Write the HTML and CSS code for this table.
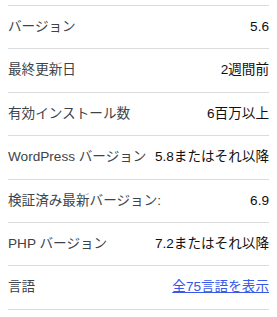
FILE: index.html
```html
<!DOCTYPE html>
<html lang="ja">

<head>
    <meta charset="UTF-8">
    <meta name="viewport" content="width=device-width, initial-scale=1.0">
    <title>プラグイン情報</title>
    <link rel="stylesheet" href="styles.css">
</head>

<body>
    <ul class="plugin-meta">
        <li>
            <span class="meta-label">バージョン</span>
            <strong class="meta-value">5.6</strong>
        </li>
        <li>
            <span class="meta-label">最終更新日</span>
            <strong class="meta-value">2週間前</strong>
        </li>
        <li>
            <span class="meta-label">有効インストール数</span>
            <strong class="meta-value">6百万以上</strong>
        </li>
        <li>
            <span class="meta-label">WordPress バージョン</span>
            <strong class="meta-value">5.8またはそれ以降</strong>
        </li>
        <li>
            <span class="meta-label">検証済み最新バージョン:</span>
            <strong class="meta-value">6.9</strong>
        </li>
        <li>
            <span class="meta-label">PHP バージョン</span>
            <strong class="meta-value">7.2またはそれ以降</strong>
        </li>
        <li>
            <span class="meta-label">言語</span>
            <a class="meta-link" href="#languages">全75言語を表示</a>
        </li>
    </ul>
</body>

</html>
```

FILE: styles.css
```css
* {
    box-sizing: border-box;
}

body {
    font-family: "Liberation Sans", "Noto Sans CJK JP", sans-serif;
    margin: 0;
    padding: 5px 8px 0;
    background-color: white;
    color: #1e1e1e;
    font-size: 13.6px;
}

.plugin-meta {
    list-style: none;
    margin: 0;
    padding: 0;
    border-bottom: 1px solid #dcdcde;
}

.plugin-meta li {
    display: flex;
    justify-content: space-between;
    align-items: center;
    gap: 8px;
    padding: 10px 0;
    line-height: 22.4px;
    white-space: nowrap;
    border-top: 1px solid #dcdcde;
}

.meta-label {
    color: #3c434a;
}

.meta-value {
    font-weight: normal;
    color: #101010;
}

.meta-link {
    color: #3858e9;
    text-decoration: underline;
}
```
